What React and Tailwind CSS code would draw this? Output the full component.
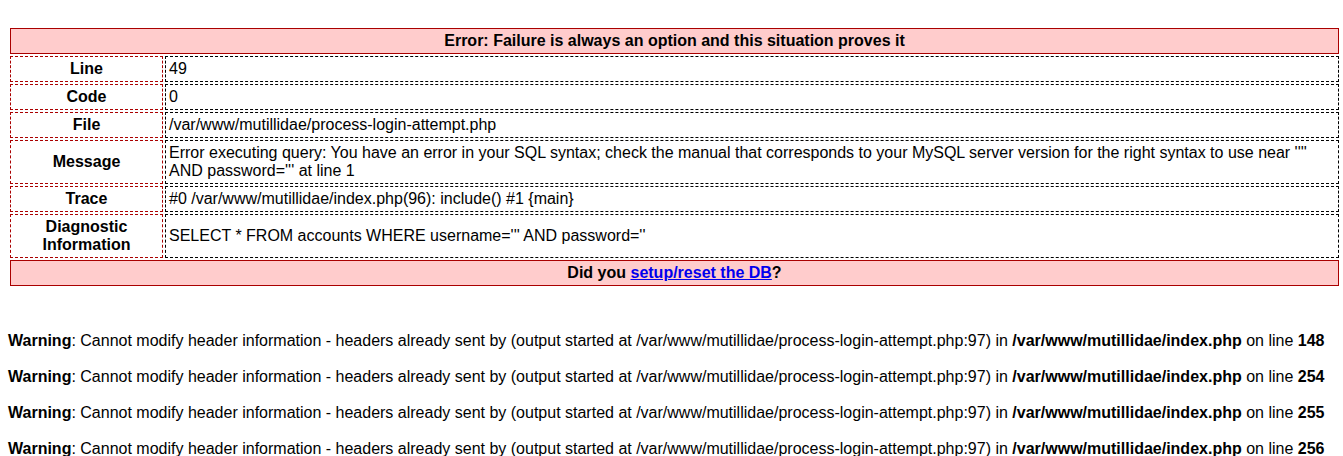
import React from "react";

const rows = [
  { label: "Line", value: "49" },
  { label: "Code", value: "0" },
  { label: "File", value: "/var/www/mutillidae/process-login-attempt.php" },
  {
    label: "Message",
    value:
      "Error executing query: You have an error in your SQL syntax; check the manual that corresponds to your MySQL server version for the right syntax to use near '''' AND password=''' at line 1",
  },
  { label: "Trace", value: "#0 /var/www/mutillidae/index.php(96): include() #1 {main}" },
  { label: "Diagnostic Information", value: "SELECT * FROM accounts WHERE username=''' AND password=''" },
];

const warningLines = ["148", "254", "255", "256"];

const App = () => {
  return (
    <div className="min-h-screen bg-white text-black text-[16px] leading-[18px] font-['Liberation_Sans',Arial,sans-serif] pt-[26px] px-[8px]">
      {/* Error table */}
      <table className="w-[1333px] border-separate border-spacing-[2px]">
        <tbody>
          <tr>
            <td
              colSpan={2}
              className="bg-[#ffcccc] border border-[#aa0000] p-[3px] text-center font-bold"
            >
              Error: Failure is always an option and this situation proves it
            </td>
          </tr>
          {rows.map((r) => (
            <tr key={r.label}>
              <td className="w-[153px] border border-dashed border-[#aa0000] p-[3px] text-center font-bold align-middle">
                {r.label}
              </td>
              <td className="border border-dashed border-black p-[3px] align-middle">
                {r.value}
              </td>
            </tr>
          ))}
          <tr>
            <td
              colSpan={2}
              className="bg-[#ffcccc] border border-[#aa0000] p-[3px] text-center font-bold"
            >
              Did you{" "}
              <a href="#" className="text-[#0000ee] underline">
                setup/reset the DB
              </a>
              ?
            </td>
          </tr>
        </tbody>
      </table>

      {/* PHP warnings */}
      <div className="mt-[44px]">
        {warningLines.map((n) => (
          <div key={n} className="mb-[18px] whitespace-nowrap">
            <b>Warning</b>: Cannot modify header information - headers already sent by (output started at
            /var/www/mutillidae/process-login-attempt.php:97) in <b>/var/www/mutillidae/index.php</b> on line{" "}
            <b>{n}</b>
          </div>
        ))}
      </div>
    </div>
  );
};

export default App;
